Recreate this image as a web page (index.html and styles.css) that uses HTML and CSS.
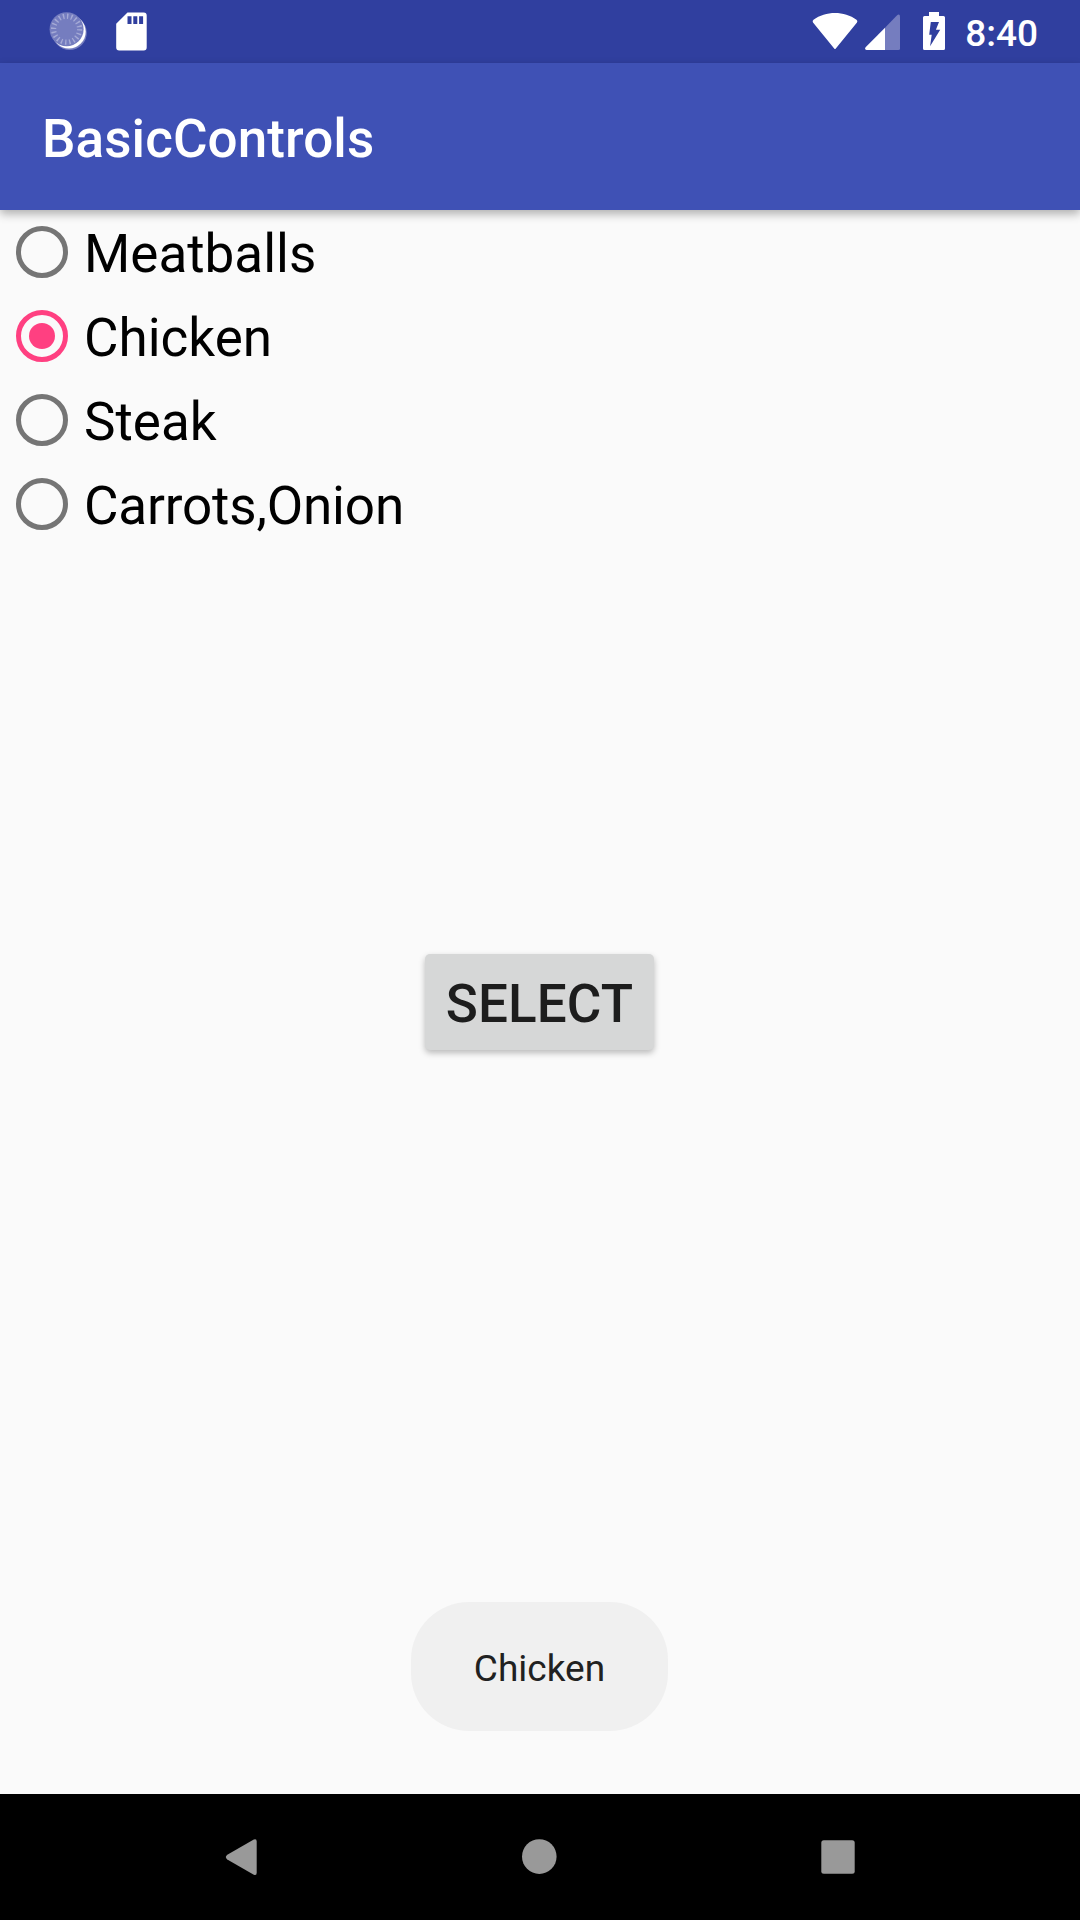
FILE: index.html
```html
<!DOCTYPE html>
<html lang="en">
<head>
<meta charset="utf-8">
<title>BasicControls</title>
<link rel="stylesheet" href="styles.css">
</head>
<body>
<div class="screen">
  <header class="status-bar">
    <div class="status-group">
      <svg class="icon-sync" width="40" height="63" viewBox="48 0 40 63">
        <circle cx="69.6" cy="32.8" r="17.2" fill="#757dbf"/>
        <circle cx="68.9" cy="31.7" r="16.8" fill="#fff"/>
        <circle cx="66.6" cy="29.2" r="17" fill="#757dbf"/>
        <circle cx="66.6" cy="29.2" r="13" fill="none" stroke="#a5aad6" stroke-width="5.2" stroke-dasharray="1.4 2.684"/>
      </svg>
      <svg class="icon-sd" width="31" height="63" viewBox="116 0 31 63">
        <path d="M127.5 12.5H143.7a3 3 0 0 1 3 3V47.5a3 3 0 0 1-3 3H119.2a3 3 0 0 1-3-3V23.8z" fill="#fff"/>
        <path d="M127.5 16.3h4v7.6h-4zM133.3 16.3h4v7.6h-4zM139.1 16.3h4v7.6h-4z" fill="#303f9f"/>
      </svg>
    </div>
    <div class="status-group">
      <svg class="icon-wifi" width="46" height="63" viewBox="812 0 46 63">
        <path d="M834.2 48.4L813 22.6Q812 21 813.5 19.8C825.5 10.7 844.5 10.7 856.5 19.8Q858 21 857 22.6L835.8 48.4Q835 49.4 834.2 48.4z" fill="#fff"/>
      </svg>
      <svg class="icon-signal" width="36" height="63" viewBox="865 0 36 63">
        <path d="M885 27.8L896.6 15.7Q900 13 900 17V48.5Q900 50 898.5 50H885z" fill="#757dbf"/>
        <path d="M885 27.8V50H866.5Q864.2 49.5 865.6 47.3z" fill="#fff"/>
      </svg>
      <svg class="icon-battery" width="23" height="63" viewBox="923 0 23 63">
        <path d="M929 12h10v4h4.5q1.5 0 1.5 1.5v31q0 1.5-1.5 1.5h-19q-1.5 0-1.5-1.5v-31q0-1.5 1.5-1.5h4.5z" fill="#fff"/>
        <path d="M930.8 22H939L935.9 29.8H940.2L930.1 46.2L931.7 34.8H929.2z" fill="#303f9f"/>
      </svg>
      <span class="clock">8:40</span>
    </div>
  </header>

  <div class="app-bar"><h1 class="app-title">BasicControls</h1></div>

  <main class="content">
    <div class="radio-group">
      <label class="radio"><span class="radio-mark"></span><span class="radio-label">Meatballs</span></label>
      <label class="radio radio-checked"><span class="radio-mark"></span><span class="radio-label">Chicken</span></label>
      <label class="radio"><span class="radio-mark"></span><span class="radio-label">Steak</span></label>
      <label class="radio"><span class="radio-mark"></span><span class="radio-label radio-label-tight">Carrots,Onion</span></label>
    </div>
    <button class="select-button" type="button">SELECT</button>
    <div class="toast">Chicken</div>
  </main>

  <nav class="nav-bar">
    <svg class="nav-icon" viewBox="0 0 126 126">
      <path d="M50.3 60.8L76.8 45.5Q79.7 44.3 79.7 47.5V78.7Q79.7 81.9 76.8 80.7L50.3 65.4Q47.3 63.1 50.3 60.8z"/>
    </svg>
    <svg class="nav-icon" viewBox="0 0 126 126"><circle cx="63.3" cy="62.6" r="17.3"/></svg>
    <svg class="nav-icon" viewBox="0 0 126 126"><rect x="46.3" y="46.3" width="33.4" height="33.4" rx="2.5"/></svg>
  </nav>
</div>
</body>
</html>
```
FILE: styles.css
```css
* {
  box-sizing: border-box;
}

body {
  margin: 0;
  font-family: Roboto, sans-serif;
}

.screen {
  display: flex;
  flex-direction: column;
  width: 1080px;
  height: 1920px;
  background: #fafafa;
}

svg {
  display: block;
  flex: none;
}

.status-bar {
  display: flex;
  justify-content: space-between;
  flex: none;
  height: 63px;
  padding: 0 42px 0 48px;
  background: #303f9f;
}

.status-group {
  display: flex;
}

.icon-sd {
  margin-left: 28px;
}

.icon-signal {
  margin-left: 7px;
}

.icon-battery {
  margin-left: 22px;
}

.clock {
  width: 74px;
  margin-left: 18px;
  padding-top: 4px;
  color: #fff;
  font-size: 37px;
  font-weight: 500;
  line-height: 60px;
  text-align: right;
}

.app-bar {
  display: flex;
  align-items: center;
  flex: none;
  height: 147px;
  padding: 5px 42px 0;
  background: #3f51b5;
  box-shadow: 0 4px 9px rgba(0, 0, 0, 0.3);
}

.app-title {
  margin: 0;
  color: #fff;
  font-size: 53px;
  font-weight: 500;
  letter-spacing: 0.08px;
  line-height: 62px;
}

.content {
  display: flex;
  flex: 1;
  flex-direction: column;
  align-items: center;
}

.radio-group {
  align-self: stretch;
}

.radio {
  display: flex;
  align-items: center;
  height: 84px;
}

.radio-mark {
  display: flex;
  align-items: center;
  justify-content: center;
  width: 52.5px;
  height: 52.5px;
  margin: 0 15.75px;
  border: 5.25px solid #757575;
  border-radius: 50%;
}

.radio-label {
  padding-top: 4px;
  color: #000;
  font-size: 53px;
  line-height: 62px;
}

.radio-label-tight {
  letter-spacing: -0.17px;
}

.radio-checked .radio-mark {
  border-color: #ff4081;
}

.radio-checked .radio-mark::after {
  width: 26px;
  height: 26px;
  border-radius: 50%;
  background: #ff4081;
  content: "";
}

.select-button {
  width: 229px;
  height: 96px;
  margin: 408px 1px 0 0;
  padding: 4px 0 0;
  border: 0;
  border-radius: 5px;
  background: #d6d7d7;
  box-shadow: 0 3px 6px rgba(0, 0, 0, 0.26);
  color: #1d1d1d;
  font-family: inherit;
  font-size: 53px;
  font-weight: 500;
  letter-spacing: 0.1px;
  line-height: 62px;
}

.toast {
  width: 257px;
  height: 129px;
  margin: auto 1px 63px 0;
  padding-top: 4px;
  border-radius: 58px;
  background: #f0f0f0;
  color: #212121;
  font-size: 37px;
  line-height: 125px;
  text-align: center;
}

.nav-bar {
  display: flex;
  justify-content: center;
  gap: 173px;
  flex: none;
  height: 126px;
  padding-right: 1.5px;
  background: #000;
}

.nav-icon {
  width: 126px;
  height: 126px;
  fill: #999;
}
```
